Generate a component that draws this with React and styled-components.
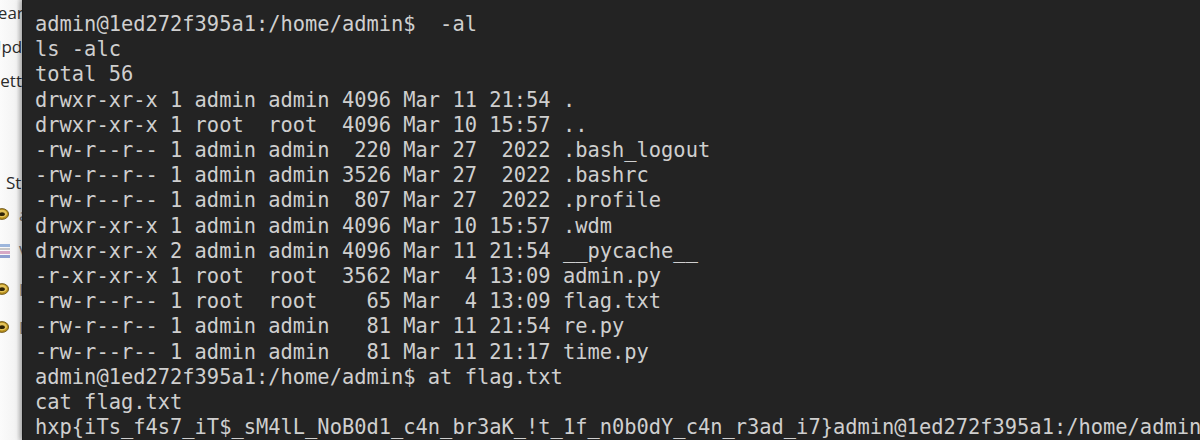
import React from 'react';
import styled, { createGlobalStyle } from 'styled-components';

const GlobalStyle = createGlobalStyle`
  html, body {
    margin: 0;
    padding: 0;
    background: #222222;
  }
`;

const Desktop = styled.div`
  display: flex;
  width: 1200px;
  height: 440px;
  overflow: hidden;
`;

const Sidebar = styled.div`
  width: 22px;
  flex: none;
  overflow: hidden;
  background: linear-gradient(90deg, #fbfbfb 0%, #f3f3f3 75%, #d9d9d9 100%);
  display: flex;
  flex-direction: column;
  font-family: "Open Sans", "Noto Sans", sans-serif;
  font-size: 17px;
  color: #2b2b2b;
`;

const NavItem = styled.div`
  flex: none;
  width: max-content;
  height: ${props => props.h}px;
  display: flex;
  align-items: center;
  gap: ${props => props.gap || 0}px;
  white-space: nowrap;
  margin-left: ${props => props.shift}px;

  svg {
    flex: none;
  }
`;

const Spacer = styled.div`
  flex: none;
  height: ${props => props.h}px;
`;

const ItemLabel = styled.span`
  color: #6f6f6f;
`;

const Terminal = styled.div`
  flex: 1;
  background: #232323;
  padding: 12px 0 0 12px;
  border-left: 1px solid #1a1a1a;
  box-shadow: -2px 0 5px rgba(0, 0, 0, 0.25);
  overflow: hidden;
  font-family: "DejaVu Sans Mono", "Liberation Mono", monospace;
  font-size: 20.4px;
  line-height: 25.2px;
  color: #cfcfcf;
`;

const Line = styled.div`
  white-space: pre;
`;

const Disc = () => (
  <svg width="14" height="12" viewBox="0 0 14 12">
    <ellipse cx="7" cy="6" rx="6.6" ry="5.4" fill="#b8901c" />
    <ellipse cx="7" cy="5.6" rx="5" ry="3.8" fill="#e4c35a" />
    <ellipse cx="7" cy="6.2" rx="2.8" ry="1.9" fill="#2e2206" />
    <ellipse cx="7" cy="6" rx="6.6" ry="5.4" fill="none" stroke="#5e4710" strokeWidth="0.8" />
  </svg>
);

const Books = () => (
  <svg width="14" height="16" viewBox="0 0 14 16">
    <rect x="0" y="1" width="14" height="3" fill="#9db6dc" />
    <rect x="0" y="5" width="14" height="2" fill="#c6c6c6" />
    <rect x="0" y="8" width="14" height="3" fill="#d7a8c6" />
    <rect x="0" y="12" width="14" height="3" fill="#8e9fd0" />
  </svg>
);

const lines = [
  'admin@1ed272f395a1:/home/admin$  -al',
  'ls -alc',
  'total 56',
  'drwxr-xr-x 1 admin admin 4096 Mar 11 21:54 .',
  'drwxr-xr-x 1 root  root  4096 Mar 10 15:57 ..',
  '-rw-r--r-- 1 admin admin  220 Mar 27  2022 .bash_logout',
  '-rw-r--r-- 1 admin admin 3526 Mar 27  2022 .bashrc',
  '-rw-r--r-- 1 admin admin  807 Mar 27  2022 .profile',
  'drwxr-xr-x 1 admin admin 4096 Mar 10 15:57 .wdm',
  'drwxr-xr-x 2 admin admin 4096 Mar 11 21:54 __pycache__',
  '-r-xr-xr-x 1 root  root  3562 Mar  4 13:09 admin.py',
  '-rw-r--r-- 1 root  root    65 Mar  4 13:09 flag.txt',
  '-rw-r--r-- 1 admin admin   81 Mar 11 21:54 re.py',
  '-rw-r--r-- 1 admin admin   81 Mar 11 21:17 time.py',
  'admin@1ed272f395a1:/home/admin$ at flag.txt',
  'cat flag.txt',
  'hxp{iTs_f4s7_iT$_sM4lL_NoB0d1_c4n_br3aK_!t_1f_n0b0dY_c4n_r3ad_i7}admin@1ed272f395a1:/home/admin$',
];

export default function App() {
  return (
    <>
      <GlobalStyle />
      <Desktop>
        <Sidebar>
          <NavItem h={24} shift={-11}>Learn</NavItem>
          <NavItem h={44} shift={-11}>Updates</NavItem>
          <NavItem h={24} shift={-9}>Settings</NavItem>
          <Spacer h={76} />
          <NavItem h={28} shift={6}>Strings</NavItem>
          <NavItem h={36} shift={-5} gap={10}><Disc /><ItemLabel>admin</ItemLabel></NavItem>
          <NavItem h={38} shift={-4} gap={9}><Books /><ItemLabel>Viewer</ItemLabel></NavItem>
          <NavItem h={38} shift={-5} gap={10}><Disc /><ItemLabel>Images</ItemLabel></NavItem>
          <NavItem h={38} shift={-5} gap={10}><Disc /><ItemLabel>Drives</ItemLabel></NavItem>
        </Sidebar>
        <Terminal>
          {lines.map((l, i) => <Line key={i}>{l}</Line>)}
        </Terminal>
      </Desktop>
    </>
  );
}
